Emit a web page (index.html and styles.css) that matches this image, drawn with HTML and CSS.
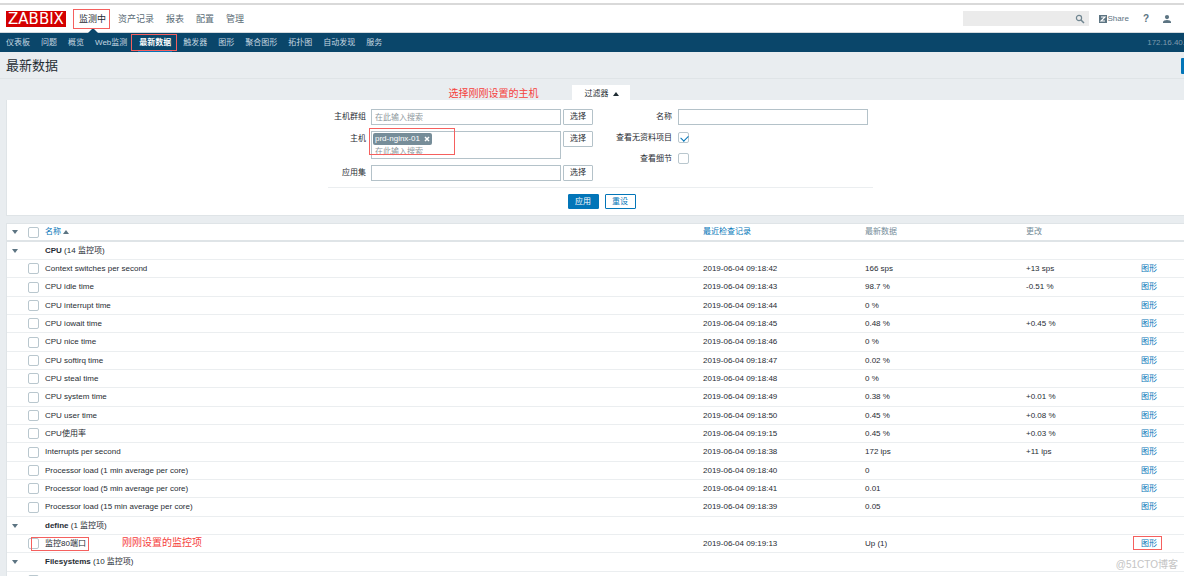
FILE: index.html
```html
<!DOCTYPE html>
<html lang="zh-CN">
<head>
<meta charset="utf-8">
<title>最新数据</title>
<link rel="stylesheet" href="styles.css">
</head>
<body>
<div class="page">
  <header class="top">
    <a class="logo" href="#">ZABBIX</a>
    <nav class="menu">
      <a class="current mark mark-menu" href="#">监测中</a>
      <a href="#">资产记录</a>
      <a href="#">报表</a>
      <a href="#">配置</a>
      <a href="#">管理</a>
    </nav>
    <div class="tools">
      <form class="search">
        <input type="text" aria-label="搜索">
        <button type="button" aria-label="搜索"><svg width="10" height="10" viewBox="0 0 10 10"><circle cx="4" cy="4" r="2.6" fill="none" stroke="#6f8590" stroke-width="1.2"/><path d="M6 6l3 3" stroke="#6f8590" stroke-width="1.5"/></svg></button>
      </form>
      <a class="share" href="#"><svg width="8" height="8" viewBox="0 0 8 8"><rect width="8" height="8" fill="#5c7482"/><path d="M2 2h4L2 6h4" fill="none" stroke="#fff" stroke-width="1.1"/></svg>Share</a>
      <a class="help" href="#">?</a>
      <a class="user" href="#" aria-label="用户"><svg width="10" height="10" viewBox="0 0 10 10"><circle cx="5" cy="3.1" r="2.1" fill="#5c7482"/><path d="M1 9V8C1 6.700 3 6 5 6s4 .7 4 2v1z" fill="#5c7482"/></svg></a>
    </div>
  </header>
  <nav class="subnav">
    <a href="#">仪表板</a>
    <a href="#">问题</a>
    <a href="#">概览</a>
    <a href="#">Web监测</a>
    <a class="current mark mark-sub" href="#">最新数据</a>
    <a href="#">触发器</a>
    <a href="#">图形</a>
    <a href="#">聚合图形</a>
    <a href="#">拓扑图</a>
    <a href="#">自动发现</a>
    <a href="#">服务</a>
    <span class="server">172.16.40.</span>
  </nav>
  <div class="title">
    <h1>最新数据</h1>
    <button type="button" aria-label="全屏"></button>
  </div>
  <main>
    <div class="tabs">
      <button class="tab" type="button">过滤器<svg width="6" height="4" viewBox="0 0 6 4"><path d="M3 0l3 4H0z" fill="#1f2c33"/></svg></button>
      <span class="note note-host">选择刚刚设置的主机</span>
    </div>
    <form class="filter">
      <div class="fields">
        <div class="left">
          <div class="row">
            <label for="groups">主机群组</label>
            <input class="box" id="groups" type="text" placeholder="在此输入搜索">
            <button class="pick" type="button">选择</button>
          </div>
          <div class="row">
            <label for="hosts">主机</label>
            <div class="box multi mark mark-host">
              <span class="chip">prd-nginx-01<button type="button" aria-label="移除"><svg width="6" height="6" viewBox="0 0 6 6"><path d="M1 1l4 4M5 1L1 5" stroke="#fff" stroke-width="1.5"/></svg></button></span>
              <input id="hosts" type="text" placeholder="在此输入搜索">
            </div>
            <button class="pick" type="button">选择</button>
          </div>
          <div class="row">
            <label for="app">应用集</label>
            <input class="box" id="app" type="text">
            <button class="pick" type="button">选择</button>
          </div>
        </div>
        <div class="right">
          <div class="row">
            <label for="name">名称</label>
            <input class="box" id="name" type="text">
          </div>
          <div class="row">
            <label for="nodata">查看无资料项目</label>
            <input id="nodata" type="checkbox" checked>
          </div>
          <div class="row">
            <label for="details">查看细节</label>
            <input id="details" type="checkbox">
          </div>
        </div>
      </div>
      <div class="actions">
        <button class="apply" type="button">应用</button>
        <button class="reset" type="button">重设</button>
      </div>
    </form>
    <table class="data">
      <colgroup><col class="c-toggle"><col class="c-check"><col><col class="c-date"><col class="c-value"><col class="c-change"><col class="c-link"></colgroup>
      <thead>
        <tr><th><button class="toggle" type="button" aria-label="折叠全部"></button></th><th><input type="checkbox" aria-label="全选"></th><th><a href="#">名称 <i class="up"></i></a></th><th><a href="#">最近检查记录</a></th><th>最新数据</th><th>更改</th><th></th></tr>
      </thead>
      <tbody>
        <tr><td><button class="toggle" type="button" aria-label="折叠 CPU"></button></td><td></td><td colspan="5"><b>CPU</b> (14 监控项)</td></tr>
        <tr><td></td><td><input type="checkbox" aria-label="Context switches per second"></td><td>Context switches per second</td><td>2019-06-04 09:18:42</td><td>166 sps</td><td>+13 sps</td><td><a href="#">图形</a></td></tr>
        <tr><td></td><td><input type="checkbox" aria-label="CPU idle time"></td><td>CPU idle time</td><td>2019-06-04 09:18:43</td><td>98.7 %</td><td>-0.51 %</td><td><a href="#">图形</a></td></tr>
        <tr><td></td><td><input type="checkbox" aria-label="CPU interrupt time"></td><td>CPU interrupt time</td><td>2019-06-04 09:18:44</td><td>0 %</td><td></td><td><a href="#">图形</a></td></tr>
        <tr><td></td><td><input type="checkbox" aria-label="CPU iowait time"></td><td>CPU iowait time</td><td>2019-06-04 09:18:45</td><td>0.48 %</td><td>+0.45 %</td><td><a href="#">图形</a></td></tr>
        <tr><td></td><td><input type="checkbox" aria-label="CPU nice time"></td><td>CPU nice time</td><td>2019-06-04 09:18:46</td><td>0 %</td><td></td><td><a href="#">图形</a></td></tr>
        <tr><td></td><td><input type="checkbox" aria-label="CPU softirq time"></td><td>CPU softirq time</td><td>2019-06-04 09:18:47</td><td>0.02 %</td><td></td><td><a href="#">图形</a></td></tr>
        <tr><td></td><td><input type="checkbox" aria-label="CPU steal time"></td><td>CPU steal time</td><td>2019-06-04 09:18:48</td><td>0 %</td><td></td><td><a href="#">图形</a></td></tr>
        <tr><td></td><td><input type="checkbox" aria-label="CPU system time"></td><td>CPU system time</td><td>2019-06-04 09:18:49</td><td>0.38 %</td><td>+0.01 %</td><td><a href="#">图形</a></td></tr>
        <tr><td></td><td><input type="checkbox" aria-label="CPU user time"></td><td>CPU user time</td><td>2019-06-04 09:18:50</td><td>0.45 %</td><td>+0.08 %</td><td><a href="#">图形</a></td></tr>
        <tr><td></td><td><input type="checkbox" aria-label="CPU使用率"></td><td>CPU使用率</td><td>2019-06-04 09:19:15</td><td>0.45 %</td><td>+0.03 %</td><td><a href="#">图形</a></td></tr>
        <tr><td></td><td><input type="checkbox" aria-label="Interrupts per second"></td><td>Interrupts per second</td><td>2019-06-04 09:18:38</td><td>172 ips</td><td>+11 ips</td><td><a href="#">图形</a></td></tr>
        <tr><td></td><td><input type="checkbox" aria-label="Processor load 1 min"></td><td>Processor load (1 min average per core)</td><td>2019-06-04 09:18:40</td><td>0</td><td></td><td><a href="#">图形</a></td></tr>
        <tr><td></td><td><input type="checkbox" aria-label="Processor load 5 min"></td><td>Processor load (5 min average per core)</td><td>2019-06-04 09:18:41</td><td>0.01</td><td></td><td><a href="#">图形</a></td></tr>
        <tr><td></td><td><input type="checkbox" aria-label="Processor load 15 min"></td><td>Processor load (15 min average per core)</td><td>2019-06-04 09:18:39</td><td>0.05</td><td></td><td><a href="#">图形</a></td></tr>
        <tr><td><button class="toggle" type="button" aria-label="折叠 define"></button></td><td></td><td colspan="5"><b>define</b> (1 监控项)</td></tr>
        <tr><td></td><td><input type="checkbox" aria-label="监控80端口"></td><td><span class="mark mark-item">监控80端口</span><span class="anchor"><span class="note note-item">刚刚设置的监控项</span></span></td><td>2019-06-04 09:19:13</td><td>Up (1)</td><td></td><td><a class="mark mark-link" href="#">图形</a></td></tr>
        <tr><td><button class="toggle" type="button" aria-label="折叠 Filesystems"></button></td><td></td><td colspan="5"><b>Filesystems</b> (10 监控项)</td></tr>
        <tr><td></td><td><input type="checkbox" aria-label="监控项"></td><td></td><td></td><td></td><td></td><td></td></tr>
      </tbody>
    </table>
  </main>
</div>
<div class="watermark">@51CTO博客</div>
</body>
</html>
```

FILE: styles.css
```css
* { box-sizing: border-box; }
body {
  margin: 0;
  height: 100vh;
  overflow: hidden;
  position: relative;
  background: #e9edf0;
  color: #1f2c33;
  font: 8px/12px "Liberation Sans", "Noto Sans CJK SC", sans-serif;
}
/* the window is slightly narrower than the page */
.page { margin-right: -17px; }
a { color: #0275b8; text-decoration: none; }
button, input { font: inherit; color: inherit; margin: 0; padding: 0; }
button { border: 0; background: none; }
svg { display: block; }

/* red annotations */
.mark { position: relative; }
.mark::after {
  content: "";
  position: absolute;
  border: 1px solid #f5605e;
  pointer-events: none;
}
.mark-menu::after { inset: -4px -4px -4px -6px; }
.mark-sub::after { inset: 1px -5px 1px -7px; }
.mark-host::after { top: -4px; left: -3px; width: 84px; height: 25px; }
.mark-item::after { inset: -2px -3px -3px -14px; }
.mark-link::after { inset: -3px -5px -2px -8px; }
.note {
  position: absolute;
  color: #f5403c;
  font-size: 10px;
  line-height: 14px;
  white-space: nowrap;
}
.anchor { position: relative; }
.note-host { top: 2px; right: calc(50% + 62px); }
.note-item { top: -3px; left: 36px; }

/* header */
.top {
  display: flex;
  align-items: center;
  height: 33px;
  padding: 5px 29px 0 6px;
  background: linear-gradient(#fff 3px, #d9d9d9 3px, #d9d9d9 5px, #fff 5px);
  border-bottom: 1px solid #d4dade;
}
.logo {
  width: 60px;
  height: 16px;
  margin-right: 13px;
  background: #d40000;
  color: #fff;
  font-family: "DejaVu Sans", sans-serif;
  font-size: 15px;
  line-height: 16px;
  text-align: center;
}
.menu { display: flex; gap: 12px; font-size: 9px; }
.menu a { color: #5a6b75; }
.menu .current { color: #1f2c33; }
.menu .current::before {
  content: "";
  position: absolute;
  left: 9px;
  bottom: -8px;
  border: 5px solid transparent;
  border-top: 0;
  border-bottom-color: #0a466a;
}
.tools { display: flex; align-items: center; margin-left: auto; color: #5c7482; }
.tools a { color: inherit; }
.search { display: flex; width: 126px; height: 15px; background: #ebebeb; }
.search input { flex: 1; min-width: 0; border: 0; background: none; outline: 0; }
.search button { width: 14px; }
.share { display: flex; align-items: center; gap: 1px; margin-left: 10px; }
.help { margin-left: 14px; font-size: 10px; font-weight: bold; }
.user { margin-left: 13px; }
.subnav {
  display: flex;
  gap: 11px;
  height: 19px;
  padding: 0 16px 0 6px;
  background: #0a466a;
  line-height: 19px;
}
.subnav a { color: #c5d6e0; }
.subnav .current {
  padding: 0 1px;
  color: #fff;
  font-weight: bold;
  box-shadow: inset 0 -2px #0275b8;
}
.server { margin-left: auto; color: #7f9bad; }

/* page title */
.title {
  display: flex;
  justify-content: space-between;
  align-items: center;
  height: 27px;
  padding: 1px 6px 0;
  border-bottom: 1px solid #dfe4e7;
}
.title h1 { margin: 0; font-size: 13px; font-weight: normal; line-height: 20px; }
.title button { width: 14px; height: 16px; background: #0275b8; border-radius: 1px; }

/* filter */
main { padding: 6px 6px 0; }
.tabs { position: relative; display: flex; justify-content: center; }
.tab {
  display: flex;
  align-items: center;
  gap: 4px;
  height: 15px;
  padding: 2px 11px 0 13px;
  background: #fff;
}
.filter {
  padding: 9px 0 6px;
  background: #fff;
  border: 1px solid #dfe4e7;
  border-top: 0;
}
.fields, .actions { width: 545px; margin: 0 auto; }
.fields {
  display: flex;
  justify-content: space-between;
  padding: 0 5px 6px 0;
  border-bottom: 1px solid #ebeef0;
}
.row { display: flex; align-items: flex-start; }
.left, .right { display: grid; align-content: start; }
.left { row-gap: 6px; }
.right { row-gap: 5px; }
.left label { width: 38px; margin-right: 5px; }
.right label { width: 64px; margin-right: 6px; }
.row label { line-height: 16px; text-align: right; white-space: nowrap; }
.box {
  width: 190px;
  height: 16px;
  padding: 0 3px;
  border: 1px solid #b4c2c9;
  background: #fff;
}
input::placeholder { color: #8e989d; opacity: 1; }
.multi { height: 28px; padding: 1px; }
.multi input { display: block; width: 100%; height: 12px; margin-top: 1px; padding: 0 2px; border: 0; outline: 0; }
.chip {
  display: flex;
  align-items: center;
  gap: 4px;
  width: max-content;
  padding: 0 2px;
  background: #768d99;
  color: #fff;
  border-radius: 2px;
}
.pick {
  width: 30px;
  height: 16px;
  margin-left: 2px;
  border: 1px solid #b4c2c9;
  border-radius: 1px;
}
input[type="checkbox"] {
  appearance: none;
  display: block;
  width: 11px;
  height: 11px;
  border: 1px solid #b9c7ce;
  border-radius: 2px;
  background: #fff;
}
.row input[type="checkbox"] { margin-top: 2px; }
.right .row { width: 260px; height: 16px; }
input[type="checkbox"]:checked::after {
  content: "";
  display: block;
  width: 6px;
  height: 4px;
  margin: 2px 0 0 2px;
  border: solid #0275b8;
  border-width: 0 0 1px 1px;
  transform: rotate(-45deg);
}
.actions { display: flex; justify-content: center; gap: 6px; padding: 6px 0 0 2px; }
.actions button {
  width: 31px;
  height: 15px;
  border: 1px solid #0275b8;
  border-radius: 1px;
  color: #0275b8;
}
.actions .apply { background: #0275b8; color: #fff; }

/* data table */
.data {
  width: 100%;
  margin-top: 7px;
  border: 1px solid #dfe4e7;
  border-spacing: 0;
  table-layout: fixed;
  background: #fff;
}
.c-toggle { width: 21px; }
.c-check { width: 17px; }
.c-date { width: 162px; }
.c-value { width: 161px; }
.c-change { width: 115px; }
.c-link { width: 53px; }
.data th, .data td {
  height: 18px;
  padding: 0;
  border-bottom: 1px solid #ebeef0;
  text-align: left;
  vertical-align: middle;
  white-space: nowrap;
}
.data th { color: #768d99; font-weight: normal; border-bottom: 2px solid #dfe4e7; }
.data tbody tr:nth-child(3n) td { height: 19px; }
.toggle { display: block; width: 15px; height: 12px; }
.toggle::before {
  content: "";
  display: block;
  margin-left: 5px;
  width: 0;
  border: 3px solid transparent;
  border-top: 4px solid #5c7482;
  border-bottom: 0;
}
.up {
  display: inline-block;
  border: 3px solid transparent;
  border-top: 0;
  border-bottom: 4px solid #5c7482;
}

.watermark {
  position: absolute;
  right: 6px;
  bottom: 4px;
  color: #c4c4c4;
  font-size: 10px;
  line-height: 14px;
}
```
